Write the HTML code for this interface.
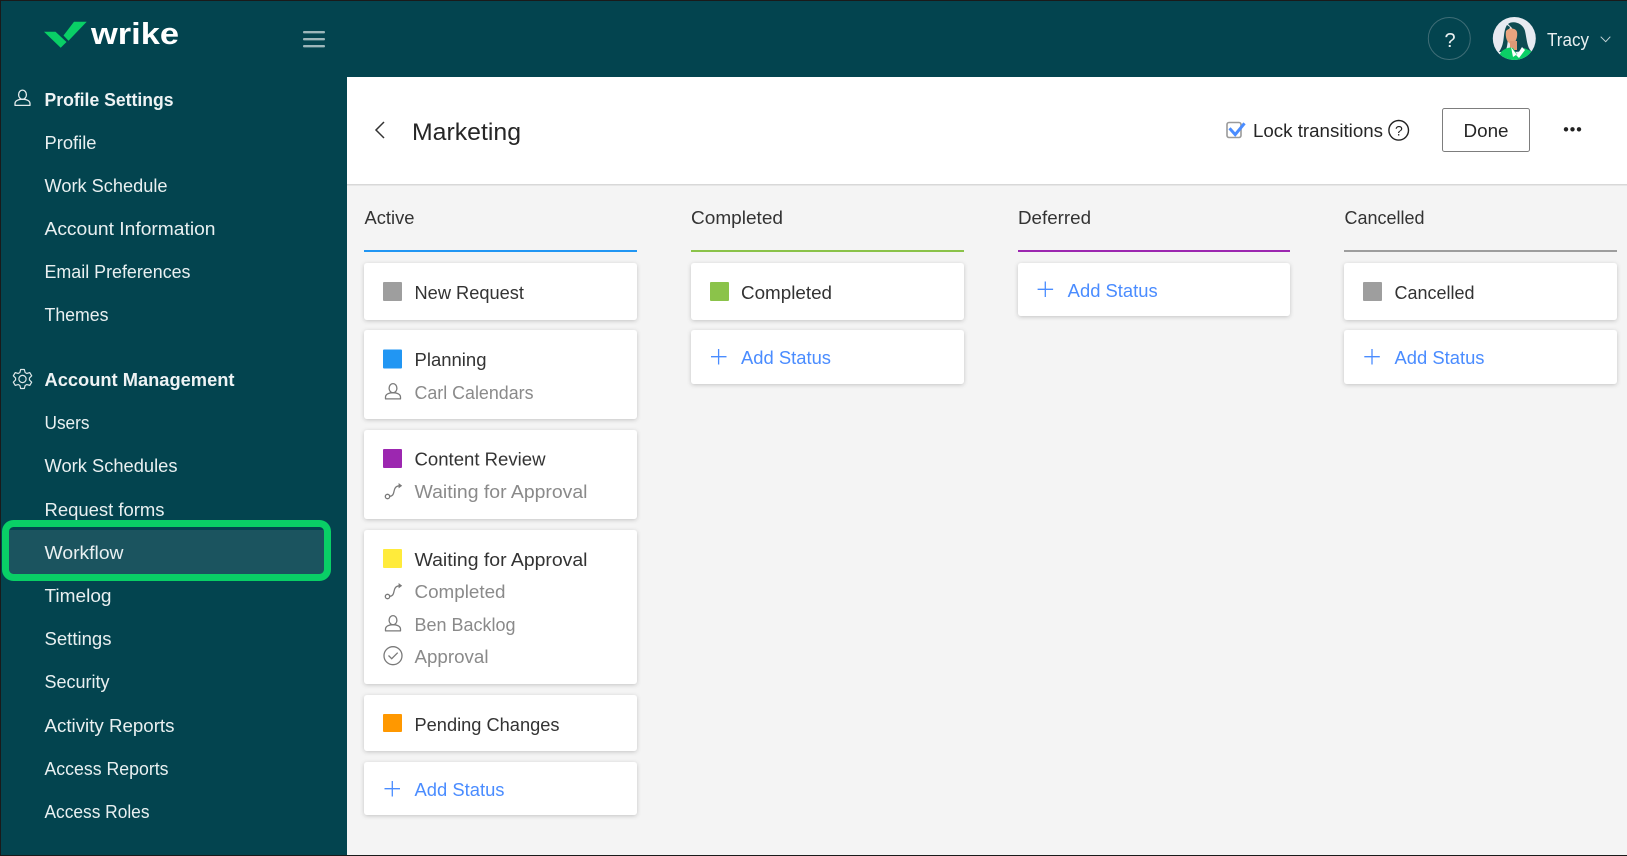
<!DOCTYPE html>
<html lang="en">
<head>
<meta charset="utf-8">
<title>Wrike Workflow – Marketing</title>
<style>
html,body{margin:0;padding:0;background:#f4f4f4;width:1627px;height:856px;overflow:hidden}
svg{display:block}
text{font-family:"Liberation Sans",sans-serif;font-size:18px}
.nav{fill:#e9f0f1}
.navb{fill:#eef3f4;font-weight:700}
.t{fill:#333}
.s{fill:#8a8a8a}
.a{fill:#4a8cff}
.ic{fill:none;stroke:#7a7a7a;stroke-width:1.3}
.plus{stroke:#4a8cff;stroke-width:1.3;fill:none}
.card{fill:#fff;filter:url(#sh)}
</style>
</head>
<body>
<svg width="1627" height="856" viewBox="0 0 1627 856" xmlns="http://www.w3.org/2000/svg">
<defs>
<filter id="sh" x="-10%" y="-20%" width="120%" height="150%"><feDropShadow dx="0" dy="1" stdDeviation="2" flood-color="#000" flood-opacity=".2"/></filter>
<clipPath id="av"><circle cx="1514.3" cy="38.5" r="21.5"/></clipPath>
<g id="person"><ellipse cx="8" cy="-11.3" rx="3.9" ry="4.6"/><path d="M0.5 -0.6v-1.8c0-3 3.6-4.4 7.5-4.4s7.5 1.4 7.5 4.4v1.8z" stroke-linejoin="round"/></g>
<g id="trans"><circle cx="2.5" cy="-1.5" r="2.2"/><path d="M4.8 -1.7C8.5 -2 8.6 -5 9.2 -7.5C9.8 -10.5 11.5 -12 14 -12.2"/><path d="M13.6 -15L17.2 -12.2L13.6 -9.6z" fill="#7a7a7a" stroke="none"/></g>
</defs>

<!-- Page frame -->
<rect width="1627" height="856" fill="#03444f"/>
<rect x="347" y="77" width="1280" height="778" fill="#f4f4f4"/>
<rect x="347" y="77" width="1280" height="107" fill="#fff"/>
<rect x="347" y="184" width="1280" height="1.5" fill="#d8d8d8"/>
<rect width="1627" height="1" fill="#1a1a1a"/>
<rect width="1" height="856" fill="#1a1a1a"/>
<rect y="855" width="1627" height="1" fill="#1a1a1a"/>

<!-- Logo -->
<polygon points="44,31.7 55.5,31.7 66.5,42 60.7,47.7" fill="#09cf66"/>
<polygon points="63.5,35.5 74,21.7 86.7,21.7 68.5,40.7" fill="#09cf66"/>
<text x="91" y="44" style="font-size:31px;font-weight:700;fill:#fff" textLength="88" lengthAdjust="spacingAndGlyphs">wrike</text>

<!-- Hamburger -->
<g fill="#9db6ba"><rect x="303" y="31" width="22" height="2.4" rx="1"/><rect x="303" y="38" width="22" height="2.4" rx="1"/><rect x="303" y="45" width="22" height="2.4" rx="1"/></g>

<!-- Sidebar -->
<g fill="none" stroke="#e3ebec" stroke-width="1.3" transform="translate(14.5,106)"><use href="#person"/></g>
<text class="navb" x="44.5" y="106" textLength="129" lengthAdjust="spacingAndGlyphs">Profile Settings</text>
<text class="nav" x="44.5" y="149" textLength="52" lengthAdjust="spacingAndGlyphs">Profile</text>
<text class="nav" x="44.5" y="192" textLength="123" lengthAdjust="spacingAndGlyphs">Work Schedule</text>
<text class="nav" x="44.5" y="235" textLength="171" lengthAdjust="spacingAndGlyphs">Account Information</text>
<text class="nav" x="44.5" y="278" textLength="146" lengthAdjust="spacingAndGlyphs">Email Preferences</text>
<text class="nav" x="44.5" y="321" textLength="64" lengthAdjust="spacingAndGlyphs">Themes</text>

<g transform="translate(22.5,379)" fill="none" stroke="#dde7e8" stroke-width="1.2" stroke-linejoin="round">
<path d="M2.62 -6.49L1.85 -9.52L-1.85 -9.52L-2.62 -6.49L-4.31 -5.52L-7.32 -6.36L-9.17 -3.16L-6.93 -.97L-6.93 .97L-9.17 3.16L-7.32 6.36L-4.31 5.52L-2.62 6.49L-1.85 9.52L1.85 9.52L2.62 6.49L4.31 5.52L7.32 6.36L9.17 3.16L6.93 .97L6.93 -.97L9.17 -3.16L7.32 -6.36L4.31 -5.52Z"/>
<circle r="3.6"/>
</g>
<text class="navb" x="44.5" y="386" textLength="190" lengthAdjust="spacingAndGlyphs">Account Management</text>
<text class="nav" x="44.5" y="429" textLength="45" lengthAdjust="spacingAndGlyphs">Users</text>
<text class="nav" x="44.5" y="472" textLength="133" lengthAdjust="spacingAndGlyphs">Work Schedules</text>
<text class="nav" x="44.5" y="516" textLength="120" lengthAdjust="spacingAndGlyphs">Request forms</text>

<rect x="9" y="530" width="315" height="44" fill="#1b545f"/>
<rect x="5.5" y="523.5" width="322" height="54" rx="8" fill="none" stroke="#09cf66" stroke-width="7"/>
<text class="nav" x="44.5" y="559" textLength="79" lengthAdjust="spacingAndGlyphs">Workflow</text>

<text class="nav" x="44.5" y="602" textLength="67" lengthAdjust="spacingAndGlyphs">Timelog</text>
<text class="nav" x="44.5" y="645" textLength="67" lengthAdjust="spacingAndGlyphs">Settings</text>
<text class="nav" x="44.5" y="688" textLength="65" lengthAdjust="spacingAndGlyphs">Security</text>
<text class="nav" x="44.5" y="732" textLength="130" lengthAdjust="spacingAndGlyphs">Activity Reports</text>
<text class="nav" x="44.5" y="775" textLength="124" lengthAdjust="spacingAndGlyphs">Access Reports</text>
<text class="nav" x="44.5" y="818" textLength="105" lengthAdjust="spacingAndGlyphs">Access Roles</text>

<!-- Top right -->
<circle cx="1449.3" cy="38.5" r="21" fill="none" stroke="#3f6d76" stroke-width="1"/>
<text x="1444.5" y="47" style="fill:#e9f0f1;font-size:20px">?</text>
<g clip-path="url(#av)">
<rect x="1490" y="15" width="50" height="50" fill="#e7eaf1"/>
<path d="M1508 24C1513 20 1523 23 1525 31C1527 40 1527 47 1531 51L1512 52L1516 42L1512 28Z" fill="#0e4b52"/>
<path d="M1507 25C1502 33 1506 42 1499 52L1505 52C1509 45 1507 35 1510 27Z" fill="#0e4b52"/>
<path d="M1506 31C1509 27 1516 28 1517 32C1518 38 1515 44 1511 44C1507 43 1505 37 1506 31Z" fill="#e9a47f"/>
<rect x="1510" y="41" width="7" height="9" fill="#e09a76"/>
<path d="M1496 62L1501 52C1505 48 1510 47 1513 48L1518 56L1524 48L1533 52L1535 62Z" fill="#0bcf66"/>
<path d="M1511 47L1517 55L1522 47L1525 50L1519 58L1516 55L1513 57Z" fill="#fff"/>
</g>
<text x="1547" y="46" style="fill:#e9f0f1" textLength="42" lengthAdjust="spacingAndGlyphs">Tracy</text>
<path d="M1600.7 36.7L1605.7 41.7L1610.3 36.7" fill="none" stroke="#c5d4d7" stroke-width="1"/>

<!-- Header -->
<path d="M384 122L376 130L384 138" fill="none" stroke="#333" stroke-width="1.5"/>
<text x="412" y="140" style="fill:#262626;font-size:24px" textLength="109" lengthAdjust="spacingAndGlyphs">Marketing</text>
<rect x="1227" y="122.5" width="14" height="15" rx="2" fill="#fff" stroke="#9a9a9a" stroke-width="1.6"/>
<path d="M1229.5 128.3L1235.2 134.6L1244.5 123.3" fill="none" stroke="#4a8cff" stroke-width="3"/>
<text x="1253" y="137" style="fill:#262626" textLength="130" lengthAdjust="spacingAndGlyphs">Lock transitions</text>
<circle cx="1398.7" cy="130.3" r="9.8" fill="none" stroke="#222" stroke-width="1.4"/>
<text x="1395" y="135.5" style="fill:#222;font-size:14px">?</text>
<rect x="1442.5" y="108.5" width="87" height="43" rx="2" fill="#fff" stroke="#7d7d7d" stroke-width="1"/>
<text x="1463.5" y="137" style="fill:#262626" textLength="45" lengthAdjust="spacingAndGlyphs">Done</text>
<g fill="#222"><circle cx="1566" cy="129.3" r="2.2"/><circle cx="1572.5" cy="129.3" r="2.2"/><circle cx="1579" cy="129.3" r="2.2"/></g>

<!-- Column headers -->
<text class="t" x="364.5" y="224" textLength="50" lengthAdjust="spacingAndGlyphs">Active</text>
<text class="t" x="691" y="224" textLength="92" lengthAdjust="spacingAndGlyphs">Completed</text>
<text class="t" x="1018" y="224" textLength="73" lengthAdjust="spacingAndGlyphs">Deferred</text>
<text class="t" x="1344.5" y="224" textLength="80" lengthAdjust="spacingAndGlyphs">Cancelled</text>
<rect x="364" y="250" width="273" height="2" fill="#2196f3"/>
<rect x="691" y="250" width="273" height="2" fill="#8bc34a"/>
<rect x="1018" y="250" width="272" height="2" fill="#9c27b0"/>
<rect x="1344" y="250" width="273" height="2" fill="#9e9e9e"/>

<!-- Active column -->
<rect class="card" x="364" y="263" width="273" height="57" rx="3"/>
<rect x="383" y="282" width="19" height="19" rx="1" fill="#9e9e9e"/>
<text class="t" x="414.5" y="299" textLength="109.5" lengthAdjust="spacingAndGlyphs">New Request</text>

<rect class="card" x="364" y="330" width="273" height="89" rx="3"/>
<rect x="383" y="349.5" width="19" height="19" rx="1" fill="#2196f3"/>
<text class="t" x="414.5" y="366" textLength="72" lengthAdjust="spacingAndGlyphs">Planning</text>
<use href="#person" class="ic" transform="translate(385,399.5)"/>
<text class="s" x="414.5" y="399" textLength="119" lengthAdjust="spacingAndGlyphs">Carl Calendars</text>

<rect class="card" x="364" y="430" width="273" height="89" rx="3"/>
<rect x="383" y="449" width="19" height="19" rx="1" fill="#9c27b0"/>
<text class="t" x="414.5" y="465.5" textLength="131" lengthAdjust="spacingAndGlyphs">Content Review</text>
<use href="#trans" class="ic" transform="translate(385,498)"/>
<text class="s" x="414.5" y="498" textLength="173" lengthAdjust="spacingAndGlyphs">Waiting for Approval</text>

<rect class="card" x="364" y="530" width="273" height="154" rx="3"/>
<rect x="383" y="549" width="19" height="19" rx="1" fill="#ffeb3b"/>
<text class="t" x="414.5" y="566" textLength="173" lengthAdjust="spacingAndGlyphs">Waiting for Approval</text>
<use href="#trans" class="ic" transform="translate(385,598)"/>
<text class="s" x="414.5" y="598" textLength="91" lengthAdjust="spacingAndGlyphs">Completed</text>
<use href="#person" class="ic" transform="translate(385,631.5)"/>
<text class="s" x="414.5" y="631" textLength="101" lengthAdjust="spacingAndGlyphs">Ben Backlog</text>
<circle cx="393" cy="655.7" r="9" class="ic"/>
<path d="M388.5 655.5l3.2 3.2l6-6" class="ic"/>
<text class="s" x="414.5" y="663" textLength="74" lengthAdjust="spacingAndGlyphs">Approval</text>

<rect class="card" x="364" y="695" width="273" height="56" rx="3"/>
<rect x="383" y="714" width="19" height="18" rx="1" fill="#ff9800"/>
<text class="t" x="414.5" y="731" textLength="145" lengthAdjust="spacingAndGlyphs">Pending Changes</text>

<rect class="card" x="364" y="762" width="273" height="53" rx="3"/>
<path class="plus" d="M384.5 788.7h15.5M392.3 781v15.5"/>
<text class="a" x="414.5" y="796" textLength="90" lengthAdjust="spacingAndGlyphs">Add Status</text>

<!-- Completed column -->
<rect class="card" x="691" y="263" width="273" height="57" rx="3"/>
<rect x="710" y="282" width="19" height="19" rx="1" fill="#8bc34a"/>
<text class="t" x="741" y="299" textLength="91" lengthAdjust="spacingAndGlyphs">Completed</text>
<rect class="card" x="691" y="330" width="273" height="54" rx="3"/>
<path class="plus" d="M711 356.7h15.5M718.6 349v15.5"/>
<text class="a" x="741" y="364" textLength="90" lengthAdjust="spacingAndGlyphs">Add Status</text>

<!-- Deferred column -->
<rect class="card" x="1018" y="263" width="272" height="53" rx="3"/>
<path class="plus" d="M1037.6 289.3h15.5M1045.3 281.5v15.5"/>
<text class="a" x="1067.7" y="297" textLength="90" lengthAdjust="spacingAndGlyphs">Add Status</text>

<!-- Cancelled column -->
<rect class="card" x="1344" y="263" width="273" height="57" rx="3"/>
<rect x="1363" y="282" width="19" height="19" rx="1" fill="#9e9e9e"/>
<text class="t" x="1394.5" y="299" textLength="80" lengthAdjust="spacingAndGlyphs">Cancelled</text>
<rect class="card" x="1344" y="330" width="273" height="54" rx="3"/>
<path class="plus" d="M1364.3 356.7h15.5M1372 349v15.5"/>
<text class="a" x="1394.5" y="364" textLength="90" lengthAdjust="spacingAndGlyphs">Add Status</text>
</svg>
</body>
</html>
